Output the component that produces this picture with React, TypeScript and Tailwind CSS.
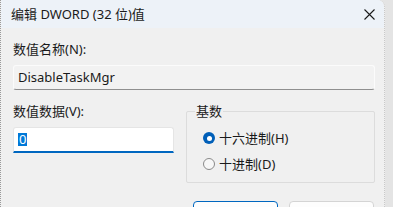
export default function App() {
  const font = { fontFamily: '"Segoe UI", "Noto Sans", "Noto Sans CJK SC", sans-serif' };
  return (
    <div className="w-[393px] h-[207px] overflow-hidden bg-[#e4e4e4] flex" style={font}>
      <div className="w-[385px] h-full flex flex-col bg-[#f0f0f0] border-l border-dotted border-l-[#9a9a9a] border-r border-r-[#c9c9c9] rounded-tr-[7px] overflow-hidden">
        {/* Title bar */}
        <div className="h-[28px] shrink-0 bg-[#edf2f8] flex items-center justify-between pl-[10px] pr-[8px]">
          <span className="text-[13px] text-[#1a1a1a] leading-none">编辑 DWORD (32 位)值</span>
          <svg width="11" height="11" viewBox="0 0 11 11" className="mr-[1px]">
            <path d="M0.5 0.5 L10.5 10.5 M10.5 0.5 L0.5 10.5" stroke="#1a1a1a" strokeWidth="1.1" fill="none" />
          </svg>
        </div>

        {/* Body */}
        <div className="flex flex-col pl-[12px] pr-[9px] pt-[13px]">
          <div className="h-[17px] text-[13px] leading-[17px] text-[#1a1a1a]">数值名称(N):</div>
          <div className="mt-[7px] h-[25px] flex items-center pl-[4px] bg-[#f2f2f2] border border-[#fbfbfb] border-b-[#8f8f8f] rounded-[3px] text-[13px] text-[#1a1a1a]">
            DisableTaskMgr
          </div>

          <div className="mt-[13px] flex">
            <div className="w-[161px] flex flex-col">
              <div className="h-[17px] text-[13px] leading-[17px] text-[#1a1a1a]">数值数据(V):</div>
              <div className="mt-[7px] h-[26px] flex items-center pl-[4px] bg-white border border-[#e5e5e5] border-b-2 border-b-[#0067c0] rounded-t-[3px]">
                <span className="bg-[#0078d7] text-white text-[13px] leading-[13px] px-[1px]">0</span>
              </div>
            </div>

            <div className="ml-[12px] flex-1">
              <div className="relative mt-[8px] h-[72px] border border-[#dcdcdc] rounded-[2px] flex flex-col gap-[14px] pl-[16px] pt-[20px]">
                <span className="absolute -top-[9px] left-[8px] bg-[#f0f0f0] px-[1px] text-[13px] leading-[17px] text-[#1a1a1a]">基数</span>
                <div className="flex items-center gap-[4px] h-[12px]">
                  <span className="w-[12px] h-[12px] rounded-full bg-[#005fb8] flex items-center justify-center">
                    <span className="w-[5px] h-[5px] rounded-full bg-white" />
                  </span>
                  <span className="text-[13px] leading-[17px] text-[#1a1a1a]">十六进制(H)</span>
                </div>
                <div className="flex items-center gap-[4px] h-[12px]">
                  <span className="w-[12px] h-[12px] rounded-full border border-[#8a8a8a] bg-[#f7f7f7]" />
                  <span className="text-[13px] leading-[17px] text-[#1a1a1a]">十进制(D)</span>
                </div>
              </div>
            </div>
          </div>

          <div className="mt-[18px] flex justify-end gap-[11px] pr-[1px]">
            <button className="w-[85px] h-[24px] rounded-[4px] border border-[#0067c0] bg-[#fdfdfd]" />
            <button className="w-[85px] h-[24px] rounded-[4px] border border-[#d4d4d4] bg-[#fdfdfd]" />
          </div>
        </div>
      </div>
    </div>
  );
}
